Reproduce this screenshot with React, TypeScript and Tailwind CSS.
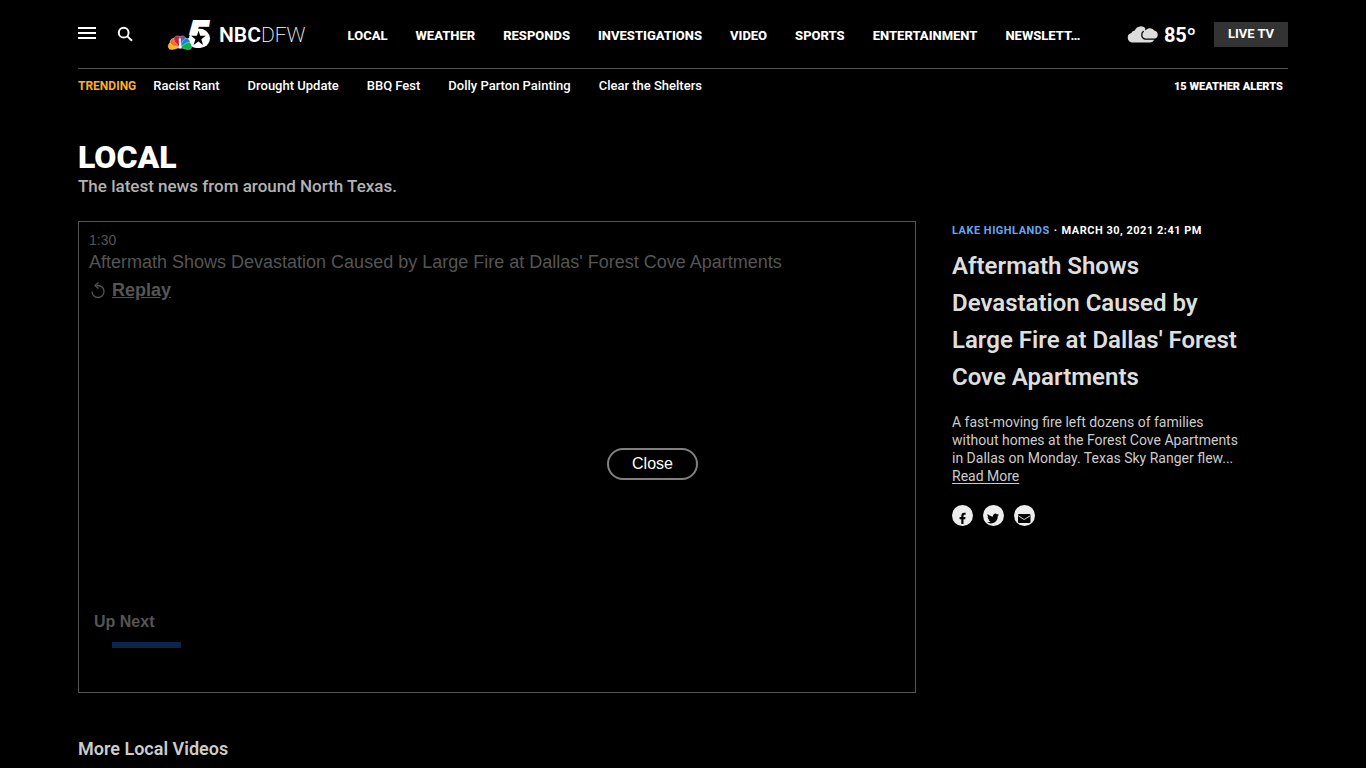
import type { ReactNode } from "react";

const sections = [
  "LOCAL",
  "WEATHER",
  "RESPONDS",
  "INVESTIGATIONS",
  "VIDEO",
  "SPORTS",
  "ENTERTAINMENT",
  "NEWSLETT…",
];

const trending = [
  "Racist Rant",
  "Drought Update",
  "BBQ Fest",
  "Dolly Parton Painting",
  "Clear the Shelters",
];

const feathers = [
  { color: "#fbb416", angle: -80 },
  { color: "#f37021", angle: -49 },
  { color: "#cc1b3c", angle: -17 },
  { color: "#6b52a2", angle: 17 },
  { color: "#0b8bd0", angle: 49 },
  { color: "#0eb14b", angle: 80 },
];

function StationLogo() {
  return (
    <a href="#home" aria-label="NBC DFW home" className="flex items-center gap-[6px]">
      <svg width="45" height="32" viewBox="0 0 45 32" className="overflow-visible" aria-hidden="true">
        <text
          x="20"
          y="29"
          fill="#fff"
          stroke="#fff"
          strokeWidth="2"
          fontFamily="Roboto, sans-serif"
          fontSize="37"
          fontWeight="900"
          fontStyle="italic"
        >
          5
        </text>
        <ellipse cx="31.500" cy="20.500" rx="10.500" ry="9.500" fill="#fff" />
        <g transform="translate(12 29.500)">
          {feathers.map((f) => (
            <path
              key={f.color}
              d="M0 0C-1.6-4-5-8-4-11.5C-3-15 3-15 4-11.5C5-8 1.6-4 0 0Z"
              fill={f.color}
              stroke="#fff"
              strokeWidth="0.4"
              transform={`rotate(${f.angle}) scale(0.84)`}
            />
          ))}
          <path d="M-1.3 1L-.7-5.5L-1.2-8.2L.3-9.4L1-8.2L.8-5.5L1.6 1Z" fill="#fff" />
        </g>
        <path
          d="M30.6 12.8L32.2 17.8H37.8L33.400 21.200L35 27L30.400 23.600L25.600 27L27.400 21.200L23 17.800H28.900Z"
          fill="#000"
        />
      </svg>
      <span className="pt-[2px] text-[21px] leading-6 text-white">
        <span className="font-semibold">NBC</span>
        <span className="font-extralight">DFW</span>
      </span>
    </a>
  );
}

function Clouds() {
  return (
    <svg width="32" height="17" viewBox="0 0 32 17" aria-hidden="true">
      <path
        d="M5 16.500A4.800 4.800 0 0 1 4.300 7.100A4 4 0 0 1 7.800 4.600A6.200 6.200 0 0 1 19 3.400A7 7 0 0 1 21 7L27.500 13C26.500 15.500 25 16.500 23 16.500Z"
        fill="#dcdcdc"
      />
      <path
        d="M18.300 12.500A3.600 3.600 0 0 1 18 5.500A5.400 5.400 0 0 1 27.600 4.800A4 4 0 0 1 28 12.500Z"
        fill="#dcdcdc"
        stroke="#000"
        strokeWidth="2.400"
        paintOrder="stroke"
      />
      <path d="M16 1.500A6.200 6.200 0 0 1 19.300 5.600L19 9L17 6Z" fill="#dcdcdc" />
    </svg>
  );
}

function ShareLink({ label, children }: { label: string; children: ReactNode }) {
  return (
    <a href="#share" aria-label={label} className="block size-[21px] rounded-full bg-[#ededed]">
      <svg width="21" height="21" viewBox="0 0 21 21" aria-hidden="true">
        {children}
      </svg>
    </a>
  );
}

function Header() {
  return (
    <header>
      <div className="flex h-[69px] items-center border-b border-[#555] text-white">
        <button type="button" aria-label="Menu" className="mb-[2px]">
          <svg width="18" height="12" viewBox="0 0 18 12" fill="#fff" aria-hidden="true">
            <path d="M0 0H18V2H0ZM0 5H18V7H0ZM0 10H18V12H0Z" />
          </svg>
        </button>
        <button type="button" aria-label="Search" className="ml-[21px]">
          <svg width="16" height="16" viewBox="0 0 16 16" fill="none" stroke="#fff" strokeWidth="2" aria-hidden="true">
            <circle cx="6.700" cy="6.700" r="4.900" />
            <path d="M10.400 10.400L15 14.800" />
          </svg>
        </button>
        <div className="ml-[35px]">
          <StationLogo />
        </div>
        <nav
          aria-label="Sections"
          className="ml-[42px] flex gap-7 pt-[3px] text-[13px] leading-5 font-extrabold whitespace-nowrap"
        >
          {sections.map((s) => (
            <a key={s} href="#section">
              {s}
            </a>
          ))}
        </nav>
        <div className="ml-auto flex items-center">
          <Clouds />
          <span className="ml-[5px] pt-[2px] text-xl leading-6 font-bold">85º</span>
          <button type="button" className="ml-[18px] h-[25px] w-[74px] bg-[#333] text-[13px] font-bold">
            LIVE TV
          </button>
        </div>
      </div>
      <div className="flex h-[34px] items-center pr-[5px] text-xs whitespace-nowrap text-white">
        <span className="font-bold text-[#fdb022]">TRENDING</span>
        <nav aria-label="Trending" className="ml-[17px] flex gap-7 text-[13px] font-medium">
          {trending.map((t) => (
            <a key={t} href="#trending">
              {t}
            </a>
          ))}
        </nav>
        <a href="#alerts" className="ml-auto pt-[2px] text-[11px] font-black">
          15 WEATHER ALERTS
        </a>
      </div>
    </header>
  );
}

function Player() {
  return (
    <section
      aria-label="Video player"
      className="relative h-[472px] w-[838px] border border-[#555] px-[10px] pt-[10px] font-['Liberation_Sans',sans-serif] text-[#555]"
    >
      <p className="text-[14px] leading-4">1:30</p>
      <p className="mt-[3px] text-lg leading-[22px]">
        Aftermath Shows Devastation Caused by Large Fire at Dallas' Forest Cove Apartments
      </p>
      <button type="button" className="mt-[5px] flex items-center gap-[6px] text-lg leading-6 font-bold">
        <svg width="17" height="18" viewBox="0 0 17 18" fill="none" stroke="#555" strokeWidth="1.300" aria-hidden="true">
          <path d="M7.500 4.500H9A6 6 0 1 1 3 10.500" />
          <path d="M9.500 1.500L6 4.500L9.500 7.500" />
        </svg>
        <span className="underline">Replay</span>
      </button>
      <p className="mt-[310px] ml-[5px] text-base leading-5 font-bold">Up Next</p>
      <div className="mt-[10px] ml-[23px] h-[6px] w-[69px] bg-[#0c234b]" />
      <button
        type="button"
        className="absolute top-[226px] left-[528px] h-8 w-[91px] rounded-full border-2 border-[#808080] bg-black text-base leading-5 text-white"
      >
        Close
      </button>
    </section>
  );
}

function Story() {
  return (
    <article className="w-[300px] pt-[1px] text-[#ccc]">
      <p className="text-[11px] leading-[18px] font-bold tracking-[0.5px] text-white">
        <a href="#lake-highlands" className="text-[#63a6f5]">
          LAKE HIGHLANDS
        </a>
        <span className="mx-1">·</span>
        <span>MARCH 30, 2021 2:41 PM</span>
      </p>
      <h2 className="mt-2 text-2xl leading-[37px] font-semibold text-[#dedede]">
        Aftermath Shows
        <br />
        Devastation Caused by
        <br />
        Large Fire at Dallas' Forest
        <br />
        Cove Apartments
      </h2>
      <p className="mt-[17px] text-[14px] leading-[18px]">
        A fast-moving fire left dozens of families
        <br />
        without homes at the Forest Cove Apartments
        <br />
        in Dallas on Monday. Texas Sky Ranger flew...
        <br />
        <a href="#story" className="underline underline-offset-2">
          Read More
        </a>
      </p>
      <div className="mt-5 flex gap-[10px]">
        <ShareLink label="Share on Facebook">
          <path
            d="M9.300 19V14.200H7.600V12.100H9.300V10.700C9.300 8.800 10.400 7.800 12.100 7.800H13.600V9.700H12.600C11.800 9.700 11.500 10.100 11.500 10.800V12.100H13.500L13.200 14.200H11.500V19Z"
            fill="#000"
          />
        </ShareLink>
        <ShareLink label="Share on Twitter">
          <path
            transform="translate(4 7.500) scale(0.500)"
            d="M23.950 4.570a10 10 0 0 1-2.820.770 4.960 4.960 0 0 0 2.160-2.720c-.95.550-2 .950-3.130 1.180a4.920 4.920 0 0 0-8.380 4.480C7.690 8.090 4.070 6.130 1.640 3.160a4.820 4.820 0 0 0-.670 2.480c0 1.710.870 3.210 2.190 4.100a4.900 4.900 0 0 1-2.230-.620v.060a4.920 4.920 0 0 0 3.950 4.830 5 5 0 0 1-2.210.080 4.940 4.940 0 0 0 4.600 3.420A9.870 9.870 0 0 1 0 19.540a13.990 13.990 0 0 0 7.550 2.210c9.050 0 14-7.500 14-13.980 0-.210 0-.420-.020-.630a9.940 9.940 0 0 0 2.420-2.570z"
            fill="#000"
          />
        </ShareLink>
        <ShareLink label="Share by email">
          <rect x="4" y="9" width="12.500" height="9" rx="1" fill="#000" />
          <path d="M4.300 10.800L10.200 14.500L16.200 10.800" fill="none" stroke="#ededed" strokeWidth="0.900" />
        </ShareLink>
      </div>
    </article>
  );
}

export default function App() {
  return (
    <div className="min-h-screen bg-black font-[Roboto,sans-serif]">
      <div className="mx-auto max-w-[1210px]">
        <Header />
        <main>
          <h1 className="mt-[38px] text-[32px] leading-8 font-black text-white">LOCAL</h1>
          <p className="mt-[2px] text-[17px] leading-[22px] font-medium text-[#b3b3b3]">
            The latest news from around North Texas.
          </p>
          <div className="mt-6 flex gap-9">
            <Player />
            <Story />
          </div>
          <h2 className="mt-11 text-lg leading-6 font-semibold text-[#ccc]">More Local Videos</h2>
        </main>
      </div>
    </div>
  );
}
